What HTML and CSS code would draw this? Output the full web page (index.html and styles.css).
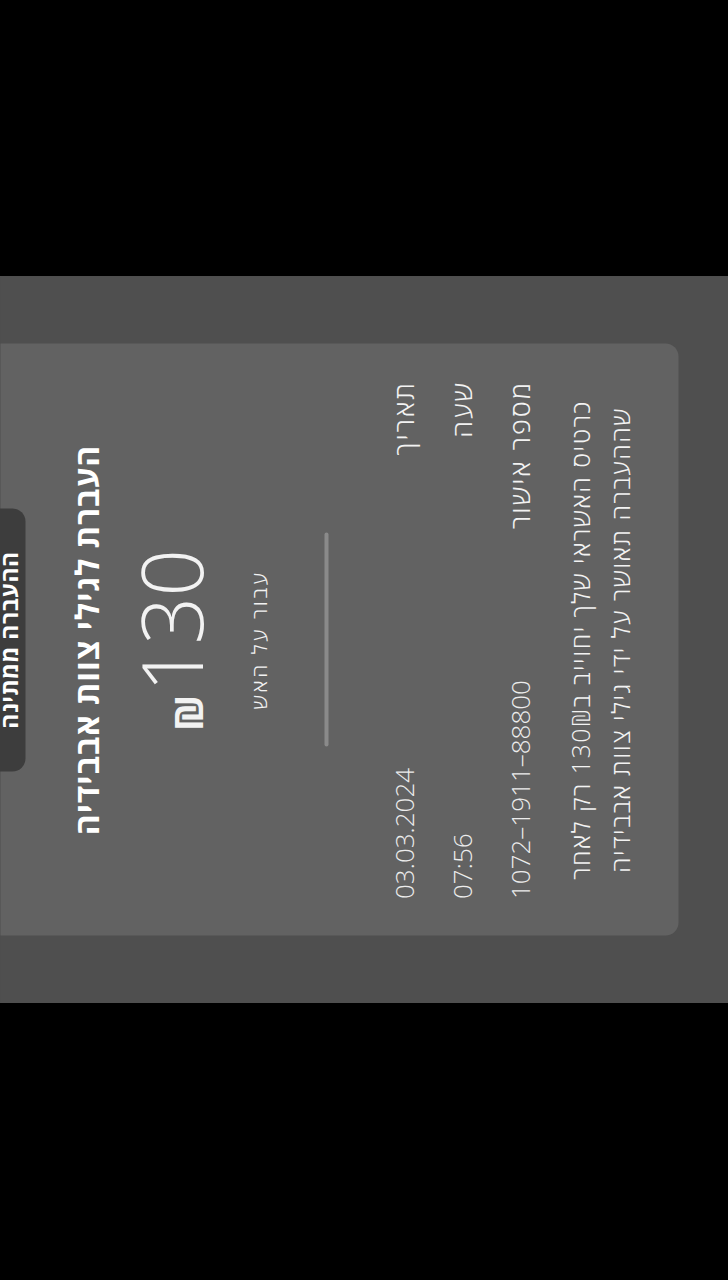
FILE: index.html
```html
<!DOCTYPE html>
<html lang="he" dir="rtl">
  <head>
    <meta charset="UTF-8" />
    <meta name="viewport" content="width=device-width, initial-scale=1.0" />
    <title>העברה לגילי צוות אבבידיה</title>
    <link rel="stylesheet" href="styles.css">
  </head>
  <body>
    <div class="stage">
      <div class="screen">
        <div class="card">
          <div class="status-pill">ההעברה ממתינה</div>
          <h1 class="title">העברת לגילי צוות אבבידיה</h1>
          <div class="amount">
            <span class="amount-value">130</span>
            <span class="amount-currency">₪</span>
          </div>
          <div class="subtitle">עבור על האש</div>
          <div class="divider"></div>
          <div class="details">
            <div class="detail-row">
              <span class="detail-label">תאריך</span>
              <span class="detail-value">03.03.2024</span>
            </div>
            <div class="detail-row">
              <span class="detail-label">שעה</span>
              <span class="detail-value">07:56</span>
            </div>
            <div class="detail-row">
              <span class="detail-label">מספר אישור</span>
              <span class="detail-value">1072–1911–88800</span>
            </div>
          </div>
          <p class="note">
            כרטיס האשראי שלך יחוייב ב130₪ רק לאחר<br>
            שההעברה תאושר על ידי גילי צוות אבבידיה
          </p>
        </div>
      </div>
    </div>
  </body>
</html>
```

FILE: styles.css
```css
html,
body {
  margin: 0;
  padding: 0;
}
body {
  background: #000;
  height: 1280px;
  font-family: "Open Sans", "DejaVu Sans", sans-serif;
  color: #f2f2f2;
  overflow: hidden;
}
.stage {
  margin-top: 276px;
  width: 728px;
  height: 727px;
  overflow: hidden;
  display: flex;
  align-items: center;
  justify-content: center;
  background: #4f4f4f;
}
/* the photo is turned a quarter turn, so the screen is drawn upright and rotated */
.screen {
  flex: none;
  width: 727px;
  height: 728px;
  transform: rotate(-90deg);
  background: #4f4f4f;
}
.card {
  width: 592px;
  margin: 0 auto;
  padding: 0 37px 39px;
  box-sizing: border-box;
  background: #626262;
  border-radius: 0 0 13px 13px;
  display: flex;
  flex-direction: column;
  align-items: center;
}
.status-pill {
  margin-top: -16px;
  width: 263px;
  padding: 10px 0 3px;
  background: #3d3d3d;
  border-radius: 13px;
  font-size: 23px;
  line-height: 28px;
  font-weight: 700;
  letter-spacing: 0.5px;
  text-align: center;
  color: #fff;
}
.title {
  margin: 41px 0 0;
  font-size: 32px;
  line-height: 40px;
  font-weight: 700;
  letter-spacing: 0.9px;
  color: #fff;
}
.amount {
  margin-top: 22px;
  display: flex;
  align-items: baseline;
  gap: 2px;
  height: 84px;
}
.amount-value {
  font-size: 84px;
  line-height: 84px;
  font-weight: 300;
}
.amount-currency {
  font-size: 40px;
  line-height: 1;
  font-weight: 700;
}
.subtitle {
  margin-top: 32px;
  font-size: 21px;
  line-height: 28px;
  font-weight: 300;
  letter-spacing: 2.6px;
}
.divider {
  margin-top: 52px;
  width: 214px;
  height: 4px;
  border-radius: 2px;
  background: #8a8a8a;
}
.details {
  align-self: stretch;
  margin-top: 57px;
  display: flex;
  flex-direction: column;
  gap: 22px;
}
.detail-row {
  display: flex;
  justify-content: space-between;
  font-size: 26px;
  line-height: 36px;
  font-weight: 300;
}
.detail-label {
  font-size: 27px;
  letter-spacing: 2px;
}
.detail-value {
  direction: ltr;
  unicode-bidi: isolate;
  color: #ececec;
}
.note {
  margin: 22px 0 0;
  font-size: 25px;
  line-height: 40px;
  font-weight: 300;
  letter-spacing: 1.5px;
  text-align: center;
}
```
